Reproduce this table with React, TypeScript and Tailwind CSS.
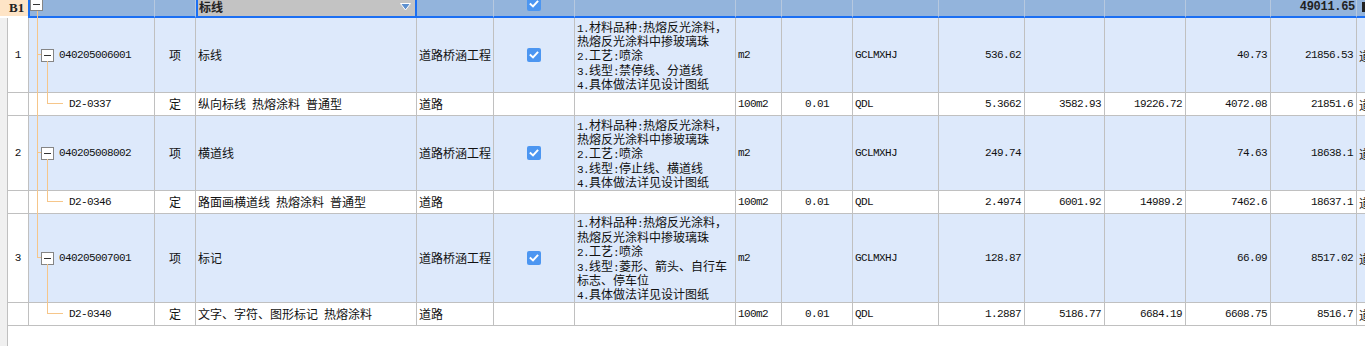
import React from 'react';

type Row = {
  kind: 'item' | 'sub';
  no?: string;
  code: string;
  type: string;
  name: string;
  spec: string;
  checked?: boolean;
  desc?: string[];
  unit: string;
  qty: string;
  expr: string;
  v: string[];
  last: string;
  h: string;
};

const cjk = { fontFamily: '"Noto Sans CJK SC", "Liberation Sans", sans-serif' };
const mono = { fontFamily: '"Liberation Mono", "Noto Sans CJK SC", monospace' };

const rows: Row[] = [
  {
    kind: 'item', no: '1', code: '040205006001', type: '项', name: '标线', spec: '道路桥涵工程', checked: true,
    desc: ['1.材料品种:热熔反光涂料，', '热熔反光涂料中掺玻璃珠', '2.工艺:喷涂', '3.线型:禁停线、分道线', '4.具体做法详见设计图纸'],
    unit: 'm2', qty: '', expr: 'GCLMXHJ', v: ['536.62', '', '', '40.73', '21856.53'], last: '道路桥涵工程', h: 'h-[75px]',
  },
  {
    kind: 'sub', code: 'D2-0337', type: '定', name: '纵向标线 热熔涂料 普通型', spec: '道路',
    unit: '100m2', qty: '0.01', expr: 'QDL', v: ['5.3662', '3582.93', '19226.72', '4072.08', '21851.6'], last: '道路', h: 'h-[23px]',
  },
  {
    kind: 'item', no: '2', code: '040205008002', type: '项', name: '横道线', spec: '道路桥涵工程', checked: true,
    desc: ['1.材料品种:热熔反光涂料，', '热熔反光涂料中掺玻璃珠', '2.工艺:喷涂', '3.线型:停止线、横道线', '4.具体做法详见设计图纸'],
    unit: 'm2', qty: '', expr: 'GCLMXHJ', v: ['249.74', '', '', '74.63', '18638.1'], last: '道路桥涵工程', h: 'h-[75px]',
  },
  {
    kind: 'sub', code: 'D2-0346', type: '定', name: '路面画横道线 热熔涂料 普通型', spec: '道路',
    unit: '100m2', qty: '0.01', expr: 'QDL', v: ['2.4974', '6001.92', '14989.2', '7462.6', '18637.1'], last: '道路', h: 'h-[23px]',
  },
  {
    kind: 'item', no: '3', code: '040205007001', type: '项', name: '标记', spec: '道路桥涵工程', checked: true,
    desc: ['1.材料品种:热熔反光涂料，', '热熔反光涂料中掺玻璃珠', '2.工艺:喷涂', '3.线型:菱形、箭头、自行车', '标志、停车位', '4.具体做法详见设计图纸'],
    unit: 'm2', qty: '', expr: 'GCLMXHJ', v: ['128.87', '', '', '66.09', '8517.02'], last: '道路桥涵工程', h: 'h-[89px]',
  },
  {
    kind: 'sub', code: 'D2-0340', type: '定', name: '文字、字符、图形标记 热熔涂料', spec: '道路',
    unit: '100m2', qty: '0.01', expr: 'QDL', v: ['1.2887', '5186.77', '6684.19', '6608.75', '8516.7'], last: '道路', h: 'h-[23px]',
  },
];

// half-width runs (digits, dots, colons, spaces) get the narrow mono face, like the 6px cells of the original
function Mixed({ text }: { text: string }) {
  const parts = text.split(/([\x20-\x7e]+)/).filter(Boolean);
  return (
    <>
      {parts.map((p, i) =>
        /^[\x20-\x7e]+$/.test(p) ? (
          <span key={i} className="text-[11px] leading-none tracking-[-0.6px] whitespace-pre" style={mono}>{p}</span>
        ) : (
          <span key={i}>{p}</span>
        )
      )}
    </>
  );
}

function Minus() {
  return (
    <span className="w-[13px] h-[13px] shrink-0 border border-[#858585] bg-white flex items-center justify-center">
      <span className="w-[7px] h-px bg-[#333]" />
    </span>
  );
}

function Check() {
  return (
    <span className="w-[14px] h-[14px] rounded-[2px] bg-[#4c96f1] flex items-center justify-center">
      <svg width="10" height="10" viewBox="0 0 10 10">
        <path d="M1.6 5.2 L4 7.4 L8.4 2.6" fill="none" stroke="white" strokeWidth="2" strokeLinecap="square" />
      </svg>
    </span>
  );
}

const cell = 'border-r border-b border-[#c0c0c0] flex items-center overflow-hidden whitespace-nowrap text-[12px] text-[#111]';
const hcell = 'h-[18px] border-r border-b-2 border-r-[#b6c8df] border-b-[#1b6ff3] bg-[#93b4dc] flex items-start overflow-hidden';

export default function App() {
  return (
    <div className="relative w-[1365px] h-[346px] overflow-hidden bg-white">
      {/* header */}
      <div className="flex">
        <div className="w-[28px] h-[18px] shrink-0 bg-[#fee4c6] border-b-2 border-white flex items-start pl-[9px] pt-[1px]">
          <span className="text-[13px] font-bold leading-[14px] text-[#222]" style={{ fontFamily: '"Liberation Serif", serif' }}>B1</span>
        </div>
        <div className="grid grid-cols-[127px_41px_221px_77px_81px_161px_46px_71px_86px_86px_80px_81px_85px_86px_70px] shrink-0">
          <div className={`${hcell} border-l-2 border-l-[#1b6ff3]`}>
            <div className="mt-[-2px]"><Minus /></div>
          </div>
          <div className={hcell} />
          <div className="h-[18px] border-x-2 border-b-2 border-[#1b6ff3] bg-[#c3c3c3] flex items-start justify-between pl-[1px] pr-[4px]">
            <span className="text-[12px] font-bold leading-[13px] text-[#222]" style={cjk}>标线</span>
            <svg width="11" height="8" viewBox="0 0 11 8" className="mt-[3px]">
              <polygon points="0.5,0.5 10.5,0.5 5.5,7" fill="#5d90cf" stroke="white" strokeWidth="1" />
            </svg>
          </div>
          <div className={hcell} />
          <div className={`${hcell} justify-center`}>
            <div className="mt-[-3px] ml-[-1px]"><Check /></div>
          </div>
          <div className={hcell} />
          <div className={hcell} />
          <div className={hcell} />
          <div className={hcell} />
          <div className={hcell} />
          <div className={hcell} />
          <div className={hcell} />
          <div className={hcell} />
          <div className={`${hcell} justify-end pr-[1px]`}>
            <span className="text-[12px] font-bold tracking-[-0.3px] leading-[14px] text-[#222]" style={mono}>49011.65</span>
          </div>
          <div className={`${hcell} border-r-0 pl-[5px] pt-[2px]`}>
            <span className="w-[3px] h-[10px] bg-[#222]" />
          </div>
        </div>
      </div>

      {/* body */}
      <div className="flex">
        <div className="w-[8px] h-[328px] shrink-0 bg-[#f0f0f0] border-r border-[#c0c0c0]" />
        <div className="shrink-0">
          {rows.map((r, i) => {
            const bg = r.kind === 'item' ? 'bg-[#dde9fb]' : 'bg-white';
            return (
              <div key={i} className={`grid grid-cols-[21px_126px_41px_221px_77px_81px_161px_46px_71px_86px_86px_80px_81px_85px_86px_70px] ${r.h}`}>
                <div className={`${cell} bg-white justify-center`} style={mono}>
                  <span className="text-[11px]">{r.no}</span>
                </div>
                <div className={`${cell} ${bg} ${r.kind === 'item' ? 'pl-[12px] gap-[5px]' : 'pl-[40px]'}`}>
                  {r.kind === 'item' && <Minus />}
                  <span className="text-[11px] tracking-[-0.6px]" style={mono}>{r.code}</span>
                </div>
                <div className={`${cell} ${bg} justify-center`} style={cjk}>{r.type}</div>
                <div className={`${cell} ${bg} pl-[2px]`} style={cjk}><Mixed text={r.name} /></div>
                <div className={`${cell} ${bg} pl-[2px]`} style={cjk}>{r.spec}</div>
                <div className={`${cell} ${bg} justify-center`}>{r.checked && <Check />}</div>
                <div className={`${cell} ${bg} pl-[2px]`} style={cjk}>
                  {r.desc && (
                    <div className="flex flex-col pt-[1px]">
                      {r.desc.map((d, j) => (
                        <div key={j} className="h-[14.4px] leading-[14.4px]"><Mixed text={d} /></div>
                      ))}
                    </div>
                  )}
                </div>
                <div className={`${cell} ${bg} pl-[2px]`} style={mono}>
                  <span className="text-[11px] tracking-[-0.6px]">{r.unit}</span>
                </div>
                <div className={`${cell} ${bg} justify-center`} style={mono}>
                  <span className="text-[11px] tracking-[-0.6px]">{r.qty}</span>
                </div>
                <div className={`${cell} ${bg} pl-[2px]`} style={mono}>
                  <span className="text-[11px] tracking-[-0.6px]">{r.expr}</span>
                </div>
                {r.v.map((n, j) => (
                  <div key={j} className={`${cell} ${bg} justify-end pr-[3px]`} style={mono}>
                    <span className="text-[11px] tracking-[-0.6px]">{n}</span>
                  </div>
                ))}
                <div className={`${cell} ${bg} border-r-0 pl-[2px] whitespace-normal`} style={cjk}>
                  <div className="w-[62px] leading-[13px]">{r.last}</div>
                </div>
              </div>
            );
          })}
        </div>
      </div>

      {/* tree connector lines */}
      <svg className="absolute left-0 top-0 pointer-events-none" width="80" height="346">
        <g stroke="#f6c68a" strokeWidth="1" fill="none">
          <line x1="37.5" y1="11" x2="37.5" y2="257.5" />
          <line x1="37" y1="54.5" x2="41" y2="54.5" />
          <line x1="37" y1="152.5" x2="41" y2="152.5" />
          <line x1="37" y1="257.5" x2="41" y2="257.5" />
          <line x1="47.5" y1="61" x2="47.5" y2="103.5" />
          <line x1="47" y1="103.5" x2="63" y2="103.5" />
          <line x1="47.5" y1="159" x2="47.5" y2="201.5" />
          <line x1="47" y1="201.5" x2="63" y2="201.5" />
          <line x1="47.5" y1="264" x2="47.5" y2="313.5" />
          <line x1="47" y1="313.5" x2="63" y2="313.5" />
        </g>
      </svg>
    </div>
  );
}
